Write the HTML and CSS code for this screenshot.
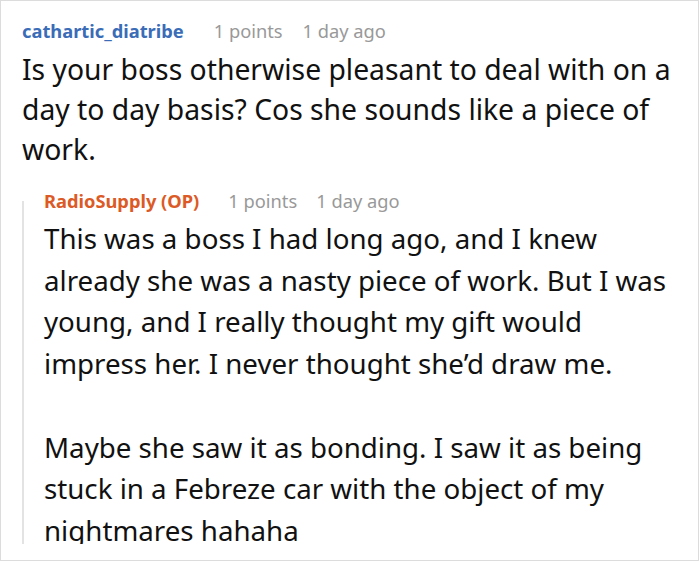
FILE: index.html
```html
<!DOCTYPE html>
<html>
<head>
<meta charset="utf-8">
<link rel="stylesheet" href="styles.css">
</head>
<body>
<div class="frame">
  <div class="comment">
    <div class="meta">
      <span class="author">cathartic_diatribe</span>
      <span class="info">1 points</span>
      <span class="info">1 day ago</span>
    </div>
    <p class="text">Is your boss otherwise pleasant to deal with on a day to day basis? Cos she sounds like a piece of work.</p>
    <div class="reply">
      <div class="rail"></div>
      <div class="reply-body">
        <div class="meta">
          <span class="author op">RadioSupply (OP)</span>
          <span class="info">1 points</span>
          <span class="info">1 day ago</span>
        </div>
        <p class="text reply-text">This was a boss I had long ago, and I knew already she was a nasty piece of work. But I was young, and I really thought my gift would impress her. I never thought she’d draw me.</p>
        <p class="text reply-text">Maybe she saw it as bonding. I saw it as being stuck in a Febreze car with the object of my nightmares hahaha</p>
      </div>
    </div>
  </div>
</div>
</body>
</html>
```
FILE: styles.css
```css
html, body {
  margin: 0;
  padding: 0;
  background: #fff;
}
.frame {
  box-sizing: border-box;
  width: 699px;
  height: 561px;
  border: 1px solid #dcdcdc;
  padding: 15px 0 0 21px;
  font-family: "Noto Sans", sans-serif;
  color: #111;
  overflow: hidden;
}
.comment {
  width: 672px;
}
.meta {
  display: flex;
  align-items: baseline;
  gap: 20px;
  font-size: 18.3px;
  line-height: 30px;
}
.author {
  font-weight: bold;
  color: #3a6cb7;
  margin-right: 10px;
}
.author.op {
  color: #dc5a26;
}
.info {
  color: #999;
}
.text {
  margin: 3px 0 0;
  font-size: 28.3px;
  line-height: 40px;
}
.reply {
  margin-top: 17px;
  height: 358px;
  overflow: hidden;
  display: grid;
  grid-template-columns: 2px 630px;
  column-gap: 20px;
}
.rail {
  margin-top: 15px;
  background: #e3e3e3;
}
.reply-body .meta {
  gap: 19px;
}
.reply-text {
  font-size: 27.7px;
  line-height: 41.7px;
  margin: 2px 0 41.7px;
}
.reply-text + .reply-text {
  margin-top: 0;
}
```
